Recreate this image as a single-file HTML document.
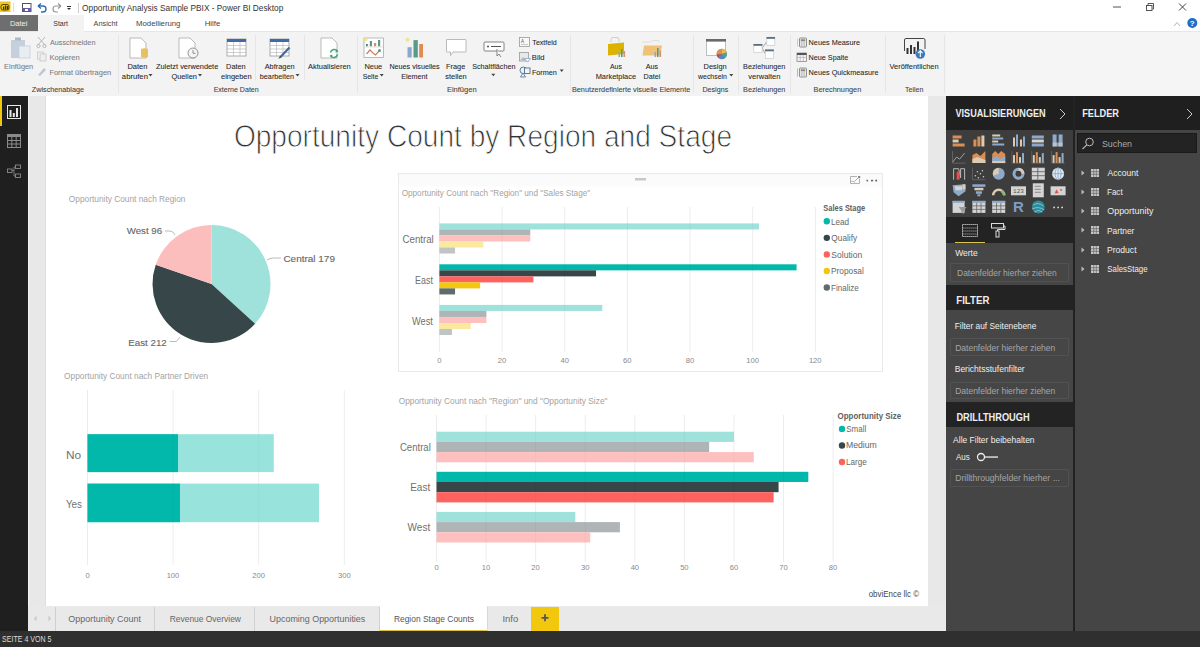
<!DOCTYPE html>
<html><head><meta charset="utf-8">
<style>
*{margin:0;padding:0;box-sizing:border-box}
html,body{width:1200px;height:647px;overflow:hidden;background:#fff;font-family:"Liberation Sans",sans-serif}
.a{position:absolute}
.t{position:absolute;white-space:nowrap;line-height:1;transform:translateY(-50%)}
.c{text-align:center;transform:translate(-50%,-50%)}
.r{text-align:right;transform:translate(-100%,-50%)}
</style></head><body>

<!-- title bar -->
<div class="a" style="left:0;top:0;width:1200px;height:15px;background:#fff"></div>
<!-- tabs row -->
<div class="a" style="left:0;top:15px;width:1200px;height:16px;background:#fff"></div>
<div class="a" style="left:0;top:15px;width:38px;height:16px;background:#6e6e6e"></div>
<!-- ribbon -->
<div class="a" style="left:0;top:31px;width:946px;height:65px;background:#f3f3f3;border-top:1px solid #e6e6e6"></div>
<div class="a" style="left:946px;top:31px;width:254px;height:65px;background:#f5f5f5;border-top:1px solid #e6e6e6"></div>

<div class="a" style="left:38px;top:15px;width:46px;height:17px;background:#f3f3f3"></div>
<!-- left nav -->
<div class="a" style="left:0;top:96px;width:28px;height:535px;background:#1f1f1f"></div>
<div class="a" style="left:0;top:96px;width:1.5px;height:30px;background:#f2c80f"></div>

<!-- canvas bg -->
<div class="a" style="left:28px;top:96px;width:918px;height:510px;background:#e8e8e8"></div>
<div class="a" style="left:46px;top:96px;width:882px;height:510px;background:#fff"></div>
<div class="a" style="left:28px;top:96px;width:1px;height:535px;background:#f4f4f4"></div>
<div class="a" style="left:45px;top:96px;width:1px;height:510px;background:#dedede"></div>

<!-- tab bar -->
<div class="a" style="left:28px;top:606px;width:918px;height:25px;background:#e9e9e9"></div>

<!-- status bar -->
<div class="a" style="left:0;top:631px;width:1200px;height:16px;background:#2f2f2f"></div>

<!-- right panes -->
<div class="a" style="left:946px;top:96px;width:254px;height:535px;background:#454545"></div>
<div class="a" style="left:946px;top:96px;width:128px;height:34px;background:#1f1f1f"></div>
<div class="a" style="left:1074px;top:96px;width:126px;height:34px;background:#1f1f1f"></div>

<!-- ===== TITLE BAR ===== -->
<svg class="a" style="left:0;top:0" width="80" height="15" viewBox="0 0 80 15">
 <rect x="0" y="1.5" width="10.5" height="10.5" fill="#f0c81c"/>
 <rect x="1" y="4.5" width="8" height="5.5" rx="2" fill="none" stroke="#5a4a10" stroke-width="1"/>
 <rect x="3" y="6.5" width="1.3" height="3" fill="#3a2a00"/><rect x="5" y="5.5" width="1.3" height="4" fill="#3a2a00"/><rect x="7" y="6" width="1.3" height="3.5" fill="#3a2a00"/>
 <rect x="13" y="3" width="1" height="9" fill="#ddd"/>
 <rect x="22.5" y="3.5" width="8.5" height="8" fill="#fff" stroke="#555" stroke-width="1"/>
 <rect x="22.5" y="8" width="8.5" height="3.5" fill="#6b58a6"/>
 <rect x="25" y="9" width="3" height="2" fill="#fff"/>
 <path d="M38 6 L41 3.5 M38 6 L41 8.5 M38 6 H43 A3 3 0 0 1 43 12 H41" stroke="#2f6db5" stroke-width="1.4" fill="none"/>
 <path d="M61 6 L58 3.5 M61 6 L58 8.5 M61 6 H56 A3 3 0 0 0 56 12 H58" stroke="#999" stroke-width="1.2" fill="none"/>
 <rect x="67" y="6" width="4" height="1" fill="#333"/>
 <path d="M67 8 H71 L69 10 Z" fill="#333"/>
 <rect x="78" y="3" width="1" height="10" fill="#ccc"/>
</svg>
<svg class="a" style="left:1100px;top:0" width="100" height="31" viewBox="0 0 100 31">
 <rect x="13" y="6.5" width="8" height="1" fill="#555"/>
 <rect x="46.5" y="5.5" width="5.5" height="5" fill="none" stroke="#444" stroke-width="0.9"/>
 <path d="M48 5 V3.5 H53.5 V9 H52.5" fill="none" stroke="#444" stroke-width="0.9"/>
 <path d="M79 3.5 L86 10.5 M86 3.5 L79 10.5" stroke="#444" stroke-width="1"/>
 <path d="M74 26 L77 22.5 L80 26" stroke="#aaa" stroke-width="0.9" fill="none"/>
 <circle cx="92.3" cy="23" r="5" fill="#1f6fc5"/>
 <text x="92.3" y="26" font-size="8" font-weight="bold" fill="#fff" text-anchor="middle" font-family="Liberation Sans">?</text>
</svg>

<!-- tabs -->

<!-- ===== RIBBON CONTENT ===== -->

 <!-- separators -->
 <div class="a" style="left:118px;top:35px;width:1px;height:58px;background:#e6e6e6"></div>
 <div class="a" style="left:255px;top:35px;width:1px;height:45px;background:#e6e6e6"></div>
 <div class="a" style="left:304px;top:35px;width:1px;height:45px;background:#e6e6e6"></div>
 <div class="a" style="left:357px;top:35px;width:1px;height:58px;background:#e6e6e6"></div>
 <div class="a" style="left:570px;top:35px;width:1px;height:58px;background:#e6e6e6"></div>
 <div class="a" style="left:693px;top:35px;width:1px;height:58px;background:#e6e6e6"></div>
 <div class="a" style="left:738px;top:35px;width:1px;height:58px;background:#e6e6e6"></div>
 <div class="a" style="left:790px;top:35px;width:1px;height:58px;background:#e6e6e6"></div>
 <div class="a" style="left:885px;top:35px;width:1px;height:58px;background:#e6e6e6"></div>
 <div class="a" style="left:944px;top:35px;width:1px;height:58px;background:#e6e6e6"></div>

        
    
         
           
            
<!-- ribbon icons -->
<svg class="a" style="left:0;top:31px" width="946" height="65" viewBox="0 31 946 65">
 <!-- Einfuegen clipboard -->
 <rect x="11" y="40" width="14" height="18" fill="#c6d0dc"/>
 <rect x="15" y="37.5" width="6" height="3" fill="#b0bac6"/>
 <rect x="19" y="46" width="11" height="12" fill="#e8edf2" stroke="#c6d0dc" stroke-width="0.8"/>
 <!-- scissors -->
 <path d="M38 37 L45 45 M45 37 L38 45" stroke="#b8b8b8" stroke-width="1"/>
 <circle cx="38.5" cy="46" r="1.6" fill="none" stroke="#b8b8b8"/><circle cx="44.5" cy="46" r="1.6" fill="none" stroke="#b8b8b8"/>
 <rect x="37.5" y="52" width="6" height="7" fill="none" stroke="#c6c6c6" stroke-width="0.8"/>
 <rect x="40" y="54" width="6" height="7" fill="#eee" stroke="#c6c6c6" stroke-width="0.8"/>
 <path d="M38 75 L44 68 L46 70 L40 76 Z" fill="#bfc6d2"/>
 <!-- Daten abrufen -->
 <path d="M130 38 H141 L146 43 V58 H130 Z" fill="#fff" stroke="#aaa" stroke-width="0.8"/>
 <path d="M141 49 Q144.5 47.5 148 49 V57 Q144.5 58.5 141 57 Z" fill="#e8c060"/>
 <!-- zuletzt -->
 <path d="M179 38 H190 L195 43 V58 H179 Z" fill="#fff" stroke="#aaa" stroke-width="0.8"/>
 <circle cx="193" cy="53" r="5" fill="#f5f5f5" stroke="#888" stroke-width="0.9"/>
 <path d="M193 50 V53.3 H195.5" stroke="#777" stroke-width="0.8" fill="none"/>
 <!-- Daten eingeben table -->
 <rect x="227" y="39" width="19" height="17" fill="#fff" stroke="#999" stroke-width="0.8"/>
 <rect x="227" y="39" width="19" height="3" fill="#3e6aa8"/>
 <path d="M227 45.5 H246 M227 49 H246 M227 52.5 H246 M233.5 42 V56 M240 42 V56" stroke="#b0b0b0" stroke-width="0.6"/>
 <!-- Abfragen bearbeiten -->
 <rect x="270" y="39" width="19" height="17" fill="#fff" stroke="#999" stroke-width="0.8"/>
 <rect x="270" y="39" width="19" height="3" fill="#3e6aa8"/>
 <path d="M270 45.5 H289 M270 49 H289 M270 52.5 H289 M276.5 42 V56 M283 42 V56" stroke="#b0b0b0" stroke-width="0.6"/>
 <path d="M280 57.5 L289.5 47.5" stroke="#3e6aa8" stroke-width="2.2"/><path d="M279 58.5 L280.5 56.5" stroke="#333" stroke-width="1"/>
 <!-- Aktualisieren -->
 <path d="M321 38 H332 L337 43 V58 H321 Z" fill="#fff" stroke="#aaa" stroke-width="0.8"/>
 <path d="M330.5 52.5 A4 4 0 0 1 337.5 51 M337.5 54.5 A4 4 0 0 1 330.5 56" stroke="#3aa776" stroke-width="1.5" fill="none"/><path d="M336 49.5 L338.5 51.5 L335.5 52.5 Z M332 57.5 L329.5 55.5 L332.5 54.5 Z" fill="#3aa776"/>
 <!-- Neue Seite -->
 <rect x="364" y="38" width="19.5" height="19.5" fill="#fff" stroke="#aaa" stroke-width="0.8"/>
 <rect x="366" y="44" width="1.8" height="2.3" fill="#4a8070"/><rect x="369.8" y="41" width="2.2" height="5.3" fill="#5a9a88"/><rect x="374" y="43" width="2.2" height="3.3" fill="#e08b4f"/><rect x="378" y="40" width="2.2" height="6.3" fill="#5a9a88"/>
 <path d="M364.5 47 H383" stroke="#ccc" stroke-width="0.6"/>
 <path d="M366.5 54 L370 50 L373.5 53.5 L375.5 55 L379.5 50.5" stroke="#c88060" stroke-width="1.2" fill="none"/>
 <circle cx="379.5" cy="50.5" r="1.5" fill="#5a9a88"/>
 <circle cx="365.5" cy="39.5" r="2" fill="#f0e090" opacity="0.9"/>
 <!-- Neues visuelles Element -->
 <rect x="407.5" y="47.2" width="4.2" height="10.3" fill="#8aa8cc"/><rect x="413.5" y="40.1" width="4.3" height="17.4" fill="#5a9a88"/><rect x="419.2" y="44" width="3.8" height="13.5" fill="#e08b4f"/>
 <circle cx="407.5" cy="39.7" r="2" fill="#f0e090" opacity="0.9"/>
 <!-- Frage stellen -->
 <path d="M447 39.5 H465.5 Q466 39.5 466 40 V51.5 Q466 52 465.5 52 H453 L450.5 55.5 V52 H447 Q446.5 52 446.5 51.5 V40 Q446.5 39.5 447 39.5 Z" fill="#fff" stroke="#aaa" stroke-width="0.8"/>
 <!-- Schaltflaechen -->
 <rect x="484" y="42" width="20" height="9" rx="1" fill="#fff" stroke="#777" stroke-width="0.9"/>
 <circle cx="488" cy="46.5" r="1" fill="#555"/><rect x="491" y="46" width="10" height="1" fill="#555"/>
 <path d="M497 49 L497 56 L499 54 L501 57" stroke="#666" stroke-width="0.8" fill="#fff"/>
 <!-- Textfeld/Bild/Formen small -->
 <rect x="519.5" y="37.5" width="10" height="9" fill="#f8f8f8" stroke="#999" stroke-width="0.8"/>
 <text x="521" y="42.5" font-size="4.5" fill="#555" font-family="Liberation Sans">A</text>
 <path d="M521 44.5 H528" stroke="#aaa" stroke-width="0.6"/>
 <rect x="519.5" y="52.5" width="9" height="8.5" fill="#e8e8e8" stroke="#999" stroke-width="0.8"/>
 <path d="M520 60.5 L523 57 L526 60.5 Z" fill="#b8b8b8"/>
 <path d="M524.5 58.5 H530.5 L527.5 62 Z" fill="#fff" stroke="#6a8ab0" stroke-width="0.6"/>
 <circle cx="523.3" cy="70.3" r="3.3" fill="#e8f0f8" stroke="#4a6e94" stroke-width="0.9"/>
 <rect x="524.5" y="68" width="5.5" height="5.5" fill="#f0f6fc" stroke="#4a6e94" stroke-width="0.9"/>
 <path d="M520.5 77 L523 73 L525.5 77 Z" fill="#f0f6fc" stroke="#4a6e94" stroke-width="0.8"/>
 <!-- Aus Marketplace -->
 <path d="M611 42 V39.5 Q611 37.5 613 37.5 H617 Q619 37.5 619 39.5 V42" fill="none" stroke="#d8d0a8" stroke-width="1"/>
 <path d="M608 44 L624 42.5 V54 L608 55.5 Z" fill="#dcb400"/>
 <rect x="618.5" y="52" width="1.6" height="5" fill="#8aa8cc"/><rect x="621" y="49" width="1.6" height="8" fill="#5a9a88"/><rect x="623.5" y="51" width="1.6" height="6" fill="#d89070"/>
 <!-- Aus Datei -->
 <path d="M642.5 42 H651 L653 40.5 H658 L660 42" fill="none" stroke="#d8d8d8" stroke-width="0.8"/>
 <path d="M644 45.5 H662 L660 55.5 H642.5 Z" fill="#efc27a"/>
 <rect x="654.5" y="52" width="1.6" height="5" fill="#8aa8cc"/><rect x="657" y="48" width="1.6" height="9" fill="#5a9a88"/><rect x="659.5" y="50.5" width="1.6" height="6.5" fill="#d89070"/>
 <!-- Design wechseln -->
 <rect x="706.5" y="39.5" width="19" height="16" fill="#fff" stroke="#b8b8b8" stroke-width="0.9"/>
 <rect x="706" y="39" width="20" height="2.6" fill="#6a6a6a"/>
 <circle cx="721.8" cy="54" r="5.2" fill="#5a86c0"/>
 <path d="M721.8 54 L721.8 48.8 A5.2 5.2 0 0 1 726.8 52.5 Z" fill="#e8b84a"/>
 <path d="M721.8 54 L726.8 52.5 A5.2 5.2 0 0 1 725.5 57.7 Z" fill="#4aa88a"/>
 <path d="M721.8 54 L716.6 54.5 A5.2 5.2 0 0 1 721.8 48.8 Z" fill="#e09050"/>
 <path d="M721.8 54 L718.2 57.8 A5.2 5.2 0 0 1 716.6 54.5 Z" fill="#c0504d"/>
 <!-- Beziehungen verwalten -->
 <path d="M762.2 48 L766.5 42 M762.2 48 L765 53.5" stroke="#888" stroke-width="0.7" fill="none"/>
 <rect x="753.8" y="44.3" width="8.3" height="8" fill="#fff" stroke="#c8c8c8" stroke-width="0.7"/>
 <rect x="753.5" y="44" width="8.8" height="1.8" fill="#5a6e82"/>
 <rect x="766.8" y="37.3" width="8" height="8" fill="#fff" stroke="#c8c8c8" stroke-width="0.7"/>
 <rect x="766.5" y="37" width="8.5" height="1.8" fill="#5a6e82"/>
 <rect x="765.3" y="49.8" width="8.3" height="8.5" fill="#fff" stroke="#c8c8c8" stroke-width="0.7"/>
 <rect x="765" y="49.5" width="8.8" height="1.8" fill="#5a6e82"/>
 <!-- Berechnungen small -->
 <rect x="799.5" y="38" width="7" height="9" rx="0.8" fill="#e8e8e8" stroke="#777" stroke-width="0.8"/>
 <rect x="800.8" y="39.3" width="4.4" height="2" fill="#888"/>
 <path d="M801 43 H805 M801 45 H805" stroke="#888" stroke-width="0.7" stroke-dasharray="1 0.6"/>
 <path d="M797.5 38.5 V46.5" stroke="#bbb" stroke-width="0.7"/>
 <rect x="797" y="53" width="9.5" height="8.5" fill="#f4f4f4" stroke="#888" stroke-width="0.8"/>
 <rect x="797" y="53" width="9.5" height="2" fill="#555"/>
 <path d="M797 57.5 H806.5 M800.2 55 V61.5 M803.3 55 V61.5" stroke="#aaa" stroke-width="0.6"/>
 <rect x="799.5" y="68" width="7" height="9" rx="0.8" fill="#e8e8e8" stroke="#777" stroke-width="0.8"/>
 <rect x="800.8" y="69.3" width="4.4" height="2" fill="#888"/>
 <path d="M801 73 H805 M801 75 H805" stroke="#888" stroke-width="0.7" stroke-dasharray="1 0.6"/>
 <path d="M797.5 68.5 V76.5" stroke="#d8b040" stroke-width="0.9"/>
 <!-- Veroeffentlichen -->
 <path d="M904.5 51 V40 Q904.5 38.5 906 38.5 H923.5 Q925 38.5 925 40 V49" fill="none" stroke="#444" stroke-width="1"/>
 <rect x="906.5" y="48" width="2" height="6" fill="#333"/><rect x="910" y="45" width="2" height="9" fill="#333"/><rect x="913.5" y="47" width="2" height="7" fill="#333"/><rect x="917" y="41.5" width="2" height="10" fill="#333"/>
 <circle cx="920.3" cy="54" r="4.8" fill="#3a7bbf"/>
 <path d="M920.3 57 V51 M918 53.2 L920.3 50.9 L922.6 53.2" stroke="#fff" stroke-width="1.1" fill="none"/>
</svg>
<svg class="a" style="left:0;top:0" width="1200" height="647" viewBox="0 0 1200 647" font-family="Liberation Sans">
<path d="M211.5 284 L211.50 225.00 A59 59 0 0 1 255.12 323.72 Z" fill="#9fe1db"/>
<path d="M211.5 284 L255.12 323.72 A59 59 0 0 1 155.73 264.76 Z" fill="#374649"/>
<path d="M211.5 284 L155.73 264.76 A59 59 0 0 1 211.50 225.00 Z" fill="#fcbdbd"/>
<path d="M165 231 H170 Q173 231 175 235" stroke="#aaa" stroke-width="0.8" fill="none"/>
<path d="M267 260 Q270 258 273 258 H281" stroke="#aaa" stroke-width="0.8" fill="none"/>
<path d="M169.5 341.5 H176.5 L180 337" stroke="#aaa" stroke-width="0.8" fill="none"/>
<rect x="398.5" y="173.5" width="484" height="198" fill="#fff" stroke="#e9e9e9" stroke-width="1"/>
<rect x="399" y="174" width="483" height="12.5" fill="#fbfbfb"/>
<rect x="635" y="178" width="11" height="2.5" fill="#c8c8c8"/>
<path d="M857 176.5 H850.5 V183.5 H859.5 V179" fill="none" stroke="#aaa" stroke-width="0.9"/>
<path d="M854.5 181.5 L859 177" stroke="#999" stroke-width="0.8" fill="none"/><rect x="858" y="176" width="2.2" height="2.2" fill="#888"/><path d="M851 181.5 Q853 180.5 855 182.5" stroke="#aaa" stroke-width="0.8" fill="none"/>
<circle cx="872.5" cy="180.5" r="0.8" fill="#777"/>
<circle cx="876.0" cy="180.5" r="0.8" fill="#777"/>
<rect x="438.90" y="207" width="1" height="145" fill="#f4f4f4"/>
<rect x="501.56" y="207" width="1" height="145" fill="#f4f4f4"/>
<rect x="564.22" y="207" width="1" height="145" fill="#f4f4f4"/>
<rect x="626.88" y="207" width="1" height="145" fill="#f4f4f4"/>
<rect x="689.54" y="207" width="1" height="145" fill="#f4f4f4"/>
<rect x="752.20" y="207" width="1" height="145" fill="#f4f4f4"/>
<rect x="814.86" y="207" width="1" height="145" fill="#f4f4f4"/>
<rect x="439.4" y="223.40" width="319.57" height="6.05" fill="#9fe1db"/>
<rect x="439.4" y="229.42" width="90.86" height="6.05" fill="#afb5b6"/>
<rect x="439.4" y="235.44" width="90.86" height="6.05" fill="#fdc0bf"/>
<rect x="439.4" y="241.46" width="43.86" height="6.05" fill="#fae99f"/>
<rect x="439.4" y="247.48" width="15.66" height="6.05" fill="#bfc4c5"/>
<rect x="439.4" y="264.30" width="357.16" height="6.05" fill="#01b8aa"/>
<rect x="439.4" y="270.32" width="156.65" height="6.05" fill="#374649"/>
<rect x="439.4" y="276.34" width="93.99" height="6.05" fill="#fd625e"/>
<rect x="439.4" y="282.36" width="40.73" height="6.05" fill="#f2c80f"/>
<rect x="439.4" y="288.38" width="15.66" height="6.05" fill="#5f6b6d"/>
<rect x="439.4" y="304.90" width="162.92" height="6.05" fill="#9fe1db"/>
<rect x="439.4" y="310.92" width="46.99" height="6.05" fill="#afb5b6"/>
<rect x="439.4" y="316.94" width="46.99" height="6.05" fill="#fdc0bf"/>
<rect x="439.4" y="322.96" width="31.33" height="6.05" fill="#fae99f"/>
<rect x="439.4" y="328.98" width="12.53" height="6.05" fill="#bfc4c5"/>
<circle cx="826.8" cy="221.30" r="3.2" fill="#01b8aa"/>
<circle cx="826.8" cy="237.85" r="3.2" fill="#374649"/>
<circle cx="826.8" cy="254.40" r="3.2" fill="#fd625e"/>
<circle cx="826.8" cy="270.95" r="3.2" fill="#f2c80f"/>
<circle cx="826.8" cy="287.50" r="3.2" fill="#5f6b6d"/>
<rect x="87.00" y="390" width="1" height="175" fill="#f4f4f4"/>
<rect x="172.60" y="390" width="1" height="175" fill="#f4f4f4"/>
<rect x="258.20" y="390" width="1" height="175" fill="#f4f4f4"/>
<rect x="343.80" y="390" width="1" height="175" fill="#f4f4f4"/>
<rect x="87.5" y="434.2" width="186.3" height="37.9" fill="#99e3dd"/>
<rect x="87.5" y="434.2" width="90.5" height="37.9" fill="#01b8aa"/>
<rect x="87.5" y="483.6" width="231.5" height="38.6" fill="#99e3dd"/>
<rect x="87.5" y="483.6" width="92.5" height="38.6" fill="#01b8aa"/>
<rect x="436.00" y="415" width="1" height="147" fill="#f4f4f4"/>
<rect x="485.57" y="415" width="1" height="147" fill="#f4f4f4"/>
<rect x="535.15" y="415" width="1" height="147" fill="#f4f4f4"/>
<rect x="584.73" y="415" width="1" height="147" fill="#f4f4f4"/>
<rect x="634.30" y="415" width="1" height="147" fill="#f4f4f4"/>
<rect x="683.88" y="415" width="1" height="147" fill="#f4f4f4"/>
<rect x="733.45" y="415" width="1" height="147" fill="#f4f4f4"/>
<rect x="783.02" y="415" width="1" height="147" fill="#f4f4f4"/>
<rect x="832.60" y="415" width="1" height="147" fill="#f4f4f4"/>
<rect x="436.5" y="431.70" width="297.45" height="10.2" fill="#9fe1db"/>
<rect x="436.5" y="441.90" width="272.66" height="10.2" fill="#afb5b6"/>
<rect x="436.5" y="452.10" width="317.28" height="10.2" fill="#fdc0bf"/>
<rect x="436.5" y="471.80" width="371.81" height="10.2" fill="#01b8aa"/>
<rect x="436.5" y="482.00" width="342.07" height="10.2" fill="#374649"/>
<rect x="436.5" y="492.20" width="337.11" height="10.2" fill="#fd625e"/>
<rect x="436.5" y="511.90" width="138.81" height="10.2" fill="#9fe1db"/>
<rect x="436.5" y="522.10" width="183.43" height="10.2" fill="#afb5b6"/>
<rect x="436.5" y="532.30" width="153.68" height="10.2" fill="#fdc0bf"/>
<circle cx="842" cy="428.90" r="3.2" fill="#01b8aa"/>
<circle cx="842" cy="445.45" r="3.2" fill="#374649"/>
<circle cx="842" cy="462.00" r="3.2" fill="#fd625e"/>
<rect x="866.5" y="179.8" width="1.6" height="1.6" fill="#666"/><rect x="871" y="179.8" width="1.6" height="1.6" fill="#666"/><rect x="875.5" y="179.8" width="1.6" height="1.6" fill="#666"/>
<rect x="438.90" y="207" width="1" height="145" fill="#000" opacity="0.03"/>
<rect x="501.56" y="207" width="1" height="145" fill="#000" opacity="0.03"/>
<rect x="564.22" y="207" width="1" height="145" fill="#000" opacity="0.03"/>
<rect x="626.88" y="207" width="1" height="145" fill="#000" opacity="0.03"/>
<rect x="689.54" y="207" width="1" height="145" fill="#000" opacity="0.03"/>
<rect x="752.20" y="207" width="1" height="145" fill="#000" opacity="0.03"/>
<rect x="814.86" y="207" width="1" height="145" fill="#000" opacity="0.03"/>
<rect x="87.00" y="390" width="1" height="175" fill="#000" opacity="0.03"/>
<rect x="172.60" y="390" width="1" height="175" fill="#000" opacity="0.03"/>
<rect x="258.20" y="390" width="1" height="175" fill="#000" opacity="0.03"/>
<rect x="343.80" y="390" width="1" height="175" fill="#000" opacity="0.03"/>
<rect x="436.00" y="415" width="1" height="147" fill="#000" opacity="0.03"/>
<rect x="485.57" y="415" width="1" height="147" fill="#000" opacity="0.03"/>
<rect x="535.15" y="415" width="1" height="147" fill="#000" opacity="0.03"/>
<rect x="584.73" y="415" width="1" height="147" fill="#000" opacity="0.03"/>
<rect x="634.30" y="415" width="1" height="147" fill="#000" opacity="0.03"/>
<rect x="683.88" y="415" width="1" height="147" fill="#000" opacity="0.03"/>
<rect x="733.45" y="415" width="1" height="147" fill="#000" opacity="0.03"/>
<rect x="783.02" y="415" width="1" height="147" fill="#000" opacity="0.03"/>
<rect x="832.60" y="415" width="1" height="147" fill="#000" opacity="0.03"/>
</svg><!-- left nav icons -->
<svg class="a" style="left:0;top:96px" width="28" height="100" viewBox="0 96 28 100">
 <rect x="7.5" y="105.5" width="13" height="13" fill="none" stroke="#e8e8e8" stroke-width="1"/>
 <rect x="9.5" y="110" width="2" height="7" fill="#e8e8e8"/><rect x="12.8" y="113" width="2" height="4" fill="#e8e8e8"/><rect x="16" y="108" width="2" height="9" fill="#e8e8e8"/>
 <rect x="7.5" y="134.5" width="13" height="13" fill="none" stroke="#8a8a8a" stroke-width="1"/>
 <rect x="7.5" y="134.5" width="13" height="2.5" fill="#8a8a8a"/>
 <path d="M7.5 140.5 H20.5 M7.5 144 H20.5 M11.8 137 V147.5 M16.2 137 V147.5" stroke="#8a8a8a" stroke-width="1"/>
 <rect x="7.5" y="169" width="4.5" height="3.5" fill="none" stroke="#8a8a8a" stroke-width="0.9"/>
 <rect x="15.5" y="165" width="5" height="3.5" fill="none" stroke="#8a8a8a" stroke-width="0.9"/>
 <rect x="15.5" y="174" width="5" height="3.5" fill="none" stroke="#8a8a8a" stroke-width="0.9"/>
 <path d="M12 170.5 H14 V167 H15.5 M14 170.5 V176 H15.5" stroke="#8a8a8a" stroke-width="0.8" fill="none"/>
</svg>

<!-- page tabs -->
<div class="a" style="left:28px;top:606px;width:27px;height:25px;background:#e9e9e9"></div>
<svg class="a" style="left:28px;top:606px" width="30" height="25" viewBox="0 0 30 25">
 <path d="M8.5 9.5 L6 12.5 L8.5 15.5" fill="#c8c8c8"/>
 <path d="M20.5 9.5 L23 12.5 L20.5 15.5" fill="#c8c8c8"/>
 <rect x="27" y="1" width="1" height="24" fill="#cfcfcf"/>
</svg>
<div class="a" style="left:154px;top:607px;width:1px;height:24px;background:#d0d0d0"></div>
<div class="a" style="left:254px;top:607px;width:1px;height:24px;background:#d0d0d0"></div>
<div class="a" style="left:379px;top:607px;width:1px;height:24px;background:#d0d0d0"></div>
<div class="a" style="left:380px;top:606px;width:107px;height:25px;background:#fff;border-bottom:1px solid #e0c040"></div>
<div class="a" style="left:487px;top:607px;width:1px;height:24px;background:#d8d8d8"></div>
<div class="a" style="left:531px;top:607px;width:28px;height:24px;background:#f2c80f"></div>

<!-- status -->

<!-- ===== VIZ PANE ===== -->
<div class="a" style="left:946px;top:130px;width:127px;height:87px;background:#3d3d3d"></div>
<div class="a" style="left:946px;top:217px;width:127px;height:26px;background:#232323"></div>
<div class="a" style="left:955px;top:241.5px;width:29.5px;height:1.5px;background:#d6c352"></div>
<div class="a" style="left:946px;top:243px;width:127px;height:42px;background:#464646"></div>
<div class="a" style="left:946px;top:285px;width:127px;height:25px;background:#232323"></div>
<div class="a" style="left:946px;top:310px;width:127px;height:92px;background:#464646"></div>
<div class="a" style="left:946px;top:402px;width:127px;height:25px;background:#232323"></div>
<div class="a" style="left:946px;top:427px;width:127px;height:204px;background:#454545"></div>
<div class="a" style="left:1073px;top:96px;width:2px;height:535px;background:#222"></div>


<svg class="a" style="left:1058px;top:108px" width="10" height="12"><path d="M2 1 L7 6 L2 11" stroke="#ccc" stroke-width="1" fill="none"/></svg>
<svg class="a" style="left:1185px;top:108px" width="10" height="12"><path d="M2 1 L7 6 L2 11" stroke="#ccc" stroke-width="1" fill="none"/></svg>

<div class="a" style="left:950px;top:263px;width:119px;height:19px;border:1px solid #525252;border-radius:1px"></div>
<div class="a" style="left:950px;top:338px;width:119px;height:18px;border:1px solid #525252;border-radius:1px"></div>
<div class="a" style="left:950px;top:382px;width:119px;height:17px;border:1px solid #525252;border-radius:1px"></div>
<svg class="a" style="left:975px;top:450px" width="26" height="14"><circle cx="6" cy="7" r="3.5" fill="none" stroke="#eee" stroke-width="1.3"/><rect x="9.5" y="6.4" width="13.5" height="1.3" fill="#eee"/></svg>
<div class="a" style="left:950px;top:469px;width:119px;height:18px;border:1px solid #525252;border-radius:1px"></div>

<!-- format tab icons -->
<svg class="a" style="left:946px;top:217px" width="127" height="26" viewBox="946 217 127 26">
 <rect x="962.5" y="224.5" width="15" height="12" fill="none" stroke="#ddd" stroke-width="1" stroke-dasharray="1.2 0.8"/>
 <path d="M962.5 228 H977.5 M962.5 231 H977.5 M962.5 234 H977.5" stroke="#ccc" stroke-width="0.8" stroke-dasharray="1.2 0.8"/>
 <rect x="991.5" y="223.5" width="12" height="4.5" fill="none" stroke="#ddd" stroke-width="1"/>
 <path d="M1003.5 226 H1005 V229.5 H997.5 V231" stroke="#ddd" stroke-width="1" fill="none"/>
 <rect x="996" y="231" width="3" height="6" fill="none" stroke="#ddd" stroke-width="1"/>
</svg>

<!-- FELDER pane -->
<div class="a" style="left:1077px;top:133px;width:120px;height:20px;background:#232323;border:1px solid #1a1a1a"></div>
<svg class="a" style="left:1080px;top:136px" width="16" height="15"><circle cx="9.5" cy="6" r="3.8" fill="none" stroke="#bbb" stroke-width="1"/><path d="M6.8 8.8 L2.5 13" stroke="#bbb" stroke-width="1.1"/></svg>
<svg class="a" style="left:946px;top:130px" width="127" height="87" viewBox="946 130 127 87">
<rect x="952.6" y="135.5" width="9" height="3" fill="#d98e55"/><rect x="952.6" y="139.5" width="6" height="3" fill="#dccbb2"/><rect x="952.6" y="143.5" width="12" height="3" fill="#d98e55"/>
<rect x="973.4" y="139.5" width="3" height="7" fill="#d98e55"/><rect x="977.4" y="136.5" width="3" height="10" fill="#d98e55"/><rect x="981.4" y="135.5" width="3" height="11" fill="#dccbb2"/>
<rect x="992.2" y="134.5" width="8" height="2" fill="#dccbb2"/><rect x="992.2" y="137.5" width="11" height="2" fill="#8eaacb"/><rect x="992.2" y="140.5" width="6" height="2" fill="#dccbb2"/><rect x="992.2" y="143.5" width="12" height="2" fill="#8eaacb"/>
<rect x="1013.0" y="137.5" width="2" height="9" fill="#dccbb2"/><rect x="1016.0" y="134.5" width="2" height="12" fill="#8eaacb"/><rect x="1020.0" y="139.5" width="2" height="7" fill="#dccbb2"/><rect x="1023.0" y="136.5" width="2" height="10" fill="#8eaacb"/>
<rect x="1031.8" y="135.5" width="12" height="3" fill="#8eaacb"/><rect x="1031.8" y="139.5" width="12" height="3" fill="#d4d4d4"/><rect x="1031.8" y="143.5" width="12" height="3" fill="#8eaacb"/>
<rect x="1052.6" y="134.5" width="4" height="12" fill="#8eaacb"/><rect x="1058.6" y="134.5" width="4" height="12" fill="#8eaacb"/><rect x="1052.6" y="142.5" width="10" height="4" fill="#d4d4d4" opacity="0.6"/>
<path d="M952.6 162.1 L956.6 157.1 L959.6 159.1 L964.6 153.1" stroke="#aaa" stroke-width="0.9" fill="none"/><path d="M952.6 151.1 V163.1 H965.6" stroke="#777" stroke-width="0.7" fill="none"/>
<path d="M972.4 163.1 V155.1 L976.4 153.1 L980.4 156.1 L985.4 151.1 V163.1 Z" fill="#d98e55"/><path d="M972.4 163.1 V159.1 L977.4 157.1 L985.4 160.1 V163.1 Z" fill="#dccbb2"/>
<path d="M992.2 163.1 V154.1 L995.2 151.1 L998.2 154.1 L1001.2 151.1 L1005.2 154.1 V163.1 Z" fill="#d98e55"/><path d="M992.2 163.1 V158.1 L996.2 156.1 L1000.2 159.1 L1005.2 156.1 V163.1 Z" fill="#8eaacb"/><rect x="992.2" y="161.1" width="13" height="2" fill="#dccbb2"/>
<rect x="1013.0" y="155.1" width="2" height="8" fill="#dccbb2"/>
<rect x="1016.0" y="152.1" width="2" height="11" fill="#d98e55"/>
<rect x="1019.0" y="157.1" width="2" height="6" fill="#dccbb2"/>
<rect x="1022.0" y="153.1" width="2" height="10" fill="#8eaacb"/>
<path d="M1012.0 151.1 V163.1 H1025.0" stroke="#777" stroke-width="0.6" fill="none"/>
<rect x="1032.8" y="155.1" width="2" height="8" fill="#dccbb2"/>
<rect x="1035.8" y="152.1" width="2" height="11" fill="#d98e55"/>
<rect x="1038.8" y="157.1" width="2" height="6" fill="#dccbb2"/>
<rect x="1041.8" y="153.1" width="2" height="10" fill="#8eaacb"/>
<path d="M1031.8 151.1 V163.1 H1044.8" stroke="#777" stroke-width="0.6" fill="none"/>
<rect x="1052.6" y="155.1" width="2" height="8" fill="#dccbb2"/>
<rect x="1055.6" y="152.1" width="2" height="11" fill="#d98e55"/>
<rect x="1058.6" y="157.1" width="2" height="6" fill="#dccbb2"/>
<rect x="1061.6" y="153.1" width="2" height="10" fill="#8eaacb"/>
<path d="M1051.6 151.1 V163.1 H1064.6" stroke="#777" stroke-width="0.6" fill="none"/>
<path d="M953.6 179.7 V168.7 H958.6 L960.6 177.7 V168.7 H964.6 V179.7" stroke="#bbb" stroke-width="1" fill="none"/><rect x="956.6" y="171.7" width="3" height="8" fill="#e0504d"/>
<circle cx="975.4" cy="175.7" r="0.8" fill="#ccc"/>
<circle cx="977.4" cy="171.7" r="0.8" fill="#ccc"/>
<circle cx="980.4" cy="173.7" r="0.8" fill="#ccc"/>
<circle cx="982.4" cy="170.7" r="0.8" fill="#ccc"/>
<circle cx="978.4" cy="177.7" r="0.8" fill="#ccc"/>
<circle cx="983.4" cy="176.7" r="0.8" fill="#ccc"/>
<path d="M972.4 167.7 V179.7 H985.4" stroke="#777" stroke-width="0.6" fill="none"/>
<circle cx="998.7" cy="173.7" r="6" fill="#8eaacb"/><path d="M998.7 173.7 V167.7 A6 6 0 0 0 993.2 175.7 Z" fill="#dccbb2"/>
<circle cx="1018.5" cy="173.7" r="4.5" fill="none" stroke="#8eaacb" stroke-width="3"/><path d="M1018.5 169.2 A4.5 4.5 0 0 1 1023.0 173.7" stroke="#dccbb2" stroke-width="3" fill="none"/>
<rect x="1031.8" y="167.7" width="13" height="12" fill="#d4d4d4"/><path d="M1031.8 171.7 H1044.8 M1031.8 175.7 H1044.8 M1037.8 167.7 V179.7" stroke="#555" stroke-width="0.8"/>
<circle cx="1058.1" cy="173.7" r="6" fill="#dfe8f2"/><path d="M1052.1 173.7 H1064.1 M1058.1 167.7 V179.7" stroke="#7a9cc6" stroke-width="0.7"/><ellipse cx="1058.1" cy="173.7" rx="3" ry="6" fill="none" stroke="#7a9cc6" stroke-width="0.7"/>
<path d="M952.6 185.3 L964.6 184.3 L965.6 191.3 L958.6 196.3 L953.6 192.3 Z" fill="#8eaacb"/><path d="M954.6 186.3 L962.6 186.3 L961.6 190.3 L955.6 190.3 Z" fill="#d4d4d4"/><rect x="962.6" y="184.3" width="3" height="5" fill="#dccbb2"/>
<rect x="972.4" y="184.3" width="13" height="2.5" fill="#8eaacb"/><rect x="974.4" y="187.8" width="9" height="2.5" fill="#dccbb2"/><rect x="975.9" y="191.3" width="6" height="2.5" fill="#8eaacb"/><rect x="977.4" y="194.3" width="3" height="2" fill="#8eaacb"/>
<path d="M993.2 195.3 A5.5 5.5 0 0 1 1004.2 195.3" stroke="#dccbb2" stroke-width="2.5" fill="none"/><path d="M1001.2 190.8 A5.5 5.5 0 0 1 1004.2 195.3" stroke="#8cb870" stroke-width="2.5" fill="none"/>
<rect x="1011.0" y="186.3" width="15" height="9" fill="#d4d4d4"/><text x="1018.5" y="193.3" font-size="6" fill="#555" text-anchor="middle" font-family="Liberation Mono">123</text>
<rect x="1032.8" y="183.3" width="11" height="14" fill="#d4d4d4"/><path d="M1034.8 186.3 H1040.8 M1034.8 189.3 H1040.8 M1034.8 192.3 H1040.8" stroke="#777" stroke-width="0.8"/>
<rect x="1050.6" y="186.3" width="15" height="9" fill="#d4d4d4"/><path d="M1054.6 193.3 L1056.6 189.3 L1058.6 193.3 Z M1059.6 189.3 H1062.6 L1061.1 191.3 Z" fill="#e0504d"/>
<rect x="952.6" y="200.9" width="12" height="12" fill="#d4d4d4"/><rect x="952.6" y="200.9" width="12" height="2" fill="#8eaacb"/><path d="M958.6 206.9 H966.6 L963.6 210.9 V213.9 L961.6 212.9 V210.9 Z" fill="#999"/>
<rect x="972.4" y="200.9" width="13" height="12" fill="#d4d4d4"/><rect x="972.4" y="200.9" width="13" height="2" fill="#8eaacb"/><path d="M972.4 205.9 H985.4 M972.4 209.4 H985.4 M976.6999999999999 202.9 V212.9 M981.0 202.9 V212.9" stroke="#666" stroke-width="0.8"/>
<rect x="992.2" y="200.9" width="13" height="12" fill="#d4d4d4"/><rect x="992.2" y="200.9" width="13" height="2" fill="#8eaacb"/><path d="M992.2 205.9 H1005.2 M992.2 209.4 H1005.2 M996.5 202.9 V212.9 M1000.8000000000001 202.9 V212.9" stroke="#666" stroke-width="0.8"/>
<text x="1018.5" y="212.4" font-size="15" font-weight="bold" fill="#7e9cc4" text-anchor="middle" font-family="Liberation Sans">R</text>
<circle cx="1038.3" cy="206.9" r="6.5" fill="#2c8a9a"/><path d="M1033.3 204.9 Q1038.3 201.9 1043.3 205.9 M1032.3 208.9 Q1038.3 205.9 1044.3 209.9 M1034.3 211.9 Q1038.3 208.9 1042.3 211.9" stroke="#9ad0d8" stroke-width="0.8" fill="none"/>
<circle cx="1054.1" cy="207.4" r="0.9" fill="#ddd"/>
<circle cx="1058.1" cy="207.4" r="0.9" fill="#ddd"/>
<circle cx="1062.1" cy="207.4" r="0.9" fill="#ddd"/>
</svg><svg class="a" style="left:1080px;top:167.8px" width="22" height="10" viewBox="0 0 22 10"><path d="M1.5 2.5 L4.5 5 L1.5 7.5 Z" fill="#bbb"/><rect x="11" y="1" width="8" height="8" fill="#c8c8c8"/><path d="M11 3.7 H19 M11 6.3 H19 M13.7 1 V9 M16.3 1 V9" stroke="#555" stroke-width="0.6"/></svg>
<svg class="a" style="left:1080px;top:187.0px" width="22" height="10" viewBox="0 0 22 10"><path d="M1.5 2.5 L4.5 5 L1.5 7.5 Z" fill="#bbb"/><rect x="11" y="1" width="8" height="8" fill="#c8c8c8"/><path d="M11 3.7 H19 M11 6.3 H19 M13.7 1 V9 M16.3 1 V9" stroke="#555" stroke-width="0.6"/></svg>
<svg class="a" style="left:1080px;top:206.2px" width="22" height="10" viewBox="0 0 22 10"><path d="M1.5 2.5 L4.5 5 L1.5 7.5 Z" fill="#bbb"/><rect x="11" y="1" width="8" height="8" fill="#c8c8c8"/><path d="M11 3.7 H19 M11 6.3 H19 M13.7 1 V9 M16.3 1 V9" stroke="#555" stroke-width="0.6"/></svg>
<svg class="a" style="left:1080px;top:225.4px" width="22" height="10" viewBox="0 0 22 10"><path d="M1.5 2.5 L4.5 5 L1.5 7.5 Z" fill="#bbb"/><rect x="11" y="1" width="8" height="8" fill="#c8c8c8"/><path d="M11 3.7 H19 M11 6.3 H19 M13.7 1 V9 M16.3 1 V9" stroke="#555" stroke-width="0.6"/></svg>
<svg class="a" style="left:1080px;top:244.6px" width="22" height="10" viewBox="0 0 22 10"><path d="M1.5 2.5 L4.5 5 L1.5 7.5 Z" fill="#bbb"/><rect x="11" y="1" width="8" height="8" fill="#c8c8c8"/><path d="M11 3.7 H19 M11 6.3 H19 M13.7 1 V9 M16.3 1 V9" stroke="#555" stroke-width="0.6"/></svg>
<svg class="a" style="left:1080px;top:263.8px" width="22" height="10" viewBox="0 0 22 10"><path d="M1.5 2.5 L4.5 5 L1.5 7.5 Z" fill="#bbb"/><rect x="11" y="1" width="8" height="8" fill="#c8c8c8"/><path d="M11 3.7 H19 M11 6.3 H19 M13.7 1 V9 M16.3 1 V9" stroke="#555" stroke-width="0.6"/></svg>
<svg class="a" style="left:0;top:0" width="1200" height="647" viewBox="0 0 1200 647">
<path d="M148.5 74.1 H152.5 L150.5 76.6 Z" fill="#444"/>
<path d="M198.0 74.1 H202.0 L200.0 76.6 Z" fill="#444"/>
<path d="M295.5 74.1 H299.5 L297.5 76.6 Z" fill="#444"/>
<path d="M379.7 74.1 H383.7 L381.7 76.6 Z" fill="#444"/>
<path d="M491.3 73.8 H495.3 L493.3 76.3 Z" fill="#444"/>
<path d="M559.7 69.6 H563.7 L561.7 72.1 Z" fill="#444"/>
<path d="M729.3 74.1 H733.3 L731.3 76.6 Z" fill="#444"/>
<path d="M541.5 617.8 H548.5 M545 614.3 V621.3" stroke="#555" stroke-width="1.8"/>
</svg>
<svg class="a" style="left:0;top:0" width="1200" height="647" viewBox="0 0 1200 647" font-family="Liberation Sans">
<text x="82.07" y="10.8" font-size="9" fill="#333" textLength="201.23" lengthAdjust="spacingAndGlyphs">Opportunity Analysis Sample PBIX - Power BI Desktop</text>
<text x="9.90" y="26.3" font-size="7.8" fill="#eeeeee" textLength="17.57" lengthAdjust="spacingAndGlyphs">Datei</text>
<text x="53.22" y="26.3" font-size="7.8" fill="#333" textLength="14.76" lengthAdjust="spacingAndGlyphs">Start</text>
<text x="93.60" y="26.3" font-size="7.8" fill="#444" textLength="23.98" lengthAdjust="spacingAndGlyphs">Ansicht</text>
<text x="136.08" y="26.3" font-size="7.8" fill="#444" textLength="44.35" lengthAdjust="spacingAndGlyphs">Modellierung</text>
<text x="204.68" y="26.3" font-size="7.8" fill="#444" textLength="15.61" lengthAdjust="spacingAndGlyphs">Hilfe</text>
<text x="4.11" y="68.6" font-size="7.6" fill="#7c7c7c" textLength="29.10" lengthAdjust="spacingAndGlyphs" stroke="#7c7c7c" stroke-width="0.07">Einfügen</text>
<text x="50.00" y="44.7" font-size="7.6" fill="#7c7c7c" textLength="45.41" lengthAdjust="spacingAndGlyphs" stroke="#7c7c7c" stroke-width="0.07">Ausschneiden</text>
<text x="49.40" y="59.7" font-size="7.6" fill="#7c7c7c" textLength="30.23" lengthAdjust="spacingAndGlyphs" stroke="#7c7c7c" stroke-width="0.07">Kopieren</text>
<text x="49.40" y="74.7" font-size="7.6" fill="#7c7c7c" textLength="61.82" lengthAdjust="spacingAndGlyphs" stroke="#7c7c7c" stroke-width="0.07">Format übertragen</text>
<text x="127.40" y="68.6" font-size="7.6" fill="#262626" textLength="20.02" lengthAdjust="spacingAndGlyphs" stroke="#262626" stroke-width="0.07">Daten</text>
<text x="121.89" y="78.5" font-size="7.6" fill="#262626" textLength="26.04" lengthAdjust="spacingAndGlyphs" stroke="#262626" stroke-width="0.07">abrufen</text>
<text x="155.98" y="68.6" font-size="7.6" fill="#262626" textLength="62.29" lengthAdjust="spacingAndGlyphs" stroke="#262626" stroke-width="0.07">Zuletzt verwendete</text>
<text x="171.40" y="78.5" font-size="7.6" fill="#262626" textLength="25.51" lengthAdjust="spacingAndGlyphs" stroke="#262626" stroke-width="0.07">Quellen</text>
<text x="226.11" y="68.6" font-size="7.6" fill="#262626" textLength="19.60" lengthAdjust="spacingAndGlyphs" stroke="#262626" stroke-width="0.07">Daten</text>
<text x="221.00" y="78.5" font-size="7.6" fill="#262626" textLength="30.62" lengthAdjust="spacingAndGlyphs" stroke="#262626" stroke-width="0.07">eingeben</text>
<text x="264.70" y="68.6" font-size="7.6" fill="#262626" textLength="29.91" lengthAdjust="spacingAndGlyphs" stroke="#262626" stroke-width="0.07">Abfragen</text>
<text x="259.87" y="78.5" font-size="7.6" fill="#262626" textLength="34.04" lengthAdjust="spacingAndGlyphs" stroke="#262626" stroke-width="0.07">bearbeiten</text>
<text x="308.00" y="68.6" font-size="7.6" fill="#262626" textLength="42.72" lengthAdjust="spacingAndGlyphs" stroke="#262626" stroke-width="0.07">Aktualisieren</text>
<text x="364.40" y="68.6" font-size="7.6" fill="#262626" textLength="17.87" lengthAdjust="spacingAndGlyphs" stroke="#262626" stroke-width="0.07">Neue</text>
<text x="362.73" y="78.5" font-size="7.6" fill="#262626" textLength="15.52" lengthAdjust="spacingAndGlyphs" stroke="#262626" stroke-width="0.07">Seite</text>
<text x="389.43" y="68.6" font-size="7.6" fill="#262626" textLength="50.29" lengthAdjust="spacingAndGlyphs" stroke="#262626" stroke-width="0.07">Neues visuelles</text>
<text x="401.13" y="78.5" font-size="7.6" fill="#262626" textLength="26.36" lengthAdjust="spacingAndGlyphs" stroke="#262626" stroke-width="0.07">Element</text>
<text x="446.11" y="68.6" font-size="7.6" fill="#262626" textLength="19.15" lengthAdjust="spacingAndGlyphs" stroke="#262626" stroke-width="0.07">Frage</text>
<text x="445.35" y="78.5" font-size="7.6" fill="#262626" textLength="21.26" lengthAdjust="spacingAndGlyphs" stroke="#262626" stroke-width="0.07">stellen</text>
<text x="472.21" y="68.6" font-size="7.6" fill="#262626" textLength="43.19" lengthAdjust="spacingAndGlyphs" stroke="#262626" stroke-width="0.07">Schaltflächen</text>
<text x="532.36" y="44.7" font-size="7.6" fill="#262626" textLength="24.34" lengthAdjust="spacingAndGlyphs" stroke="#262626" stroke-width="0.07">Textfeld</text>
<text x="531.89" y="59.7" font-size="7.6" fill="#262626" textLength="12.74" lengthAdjust="spacingAndGlyphs" stroke="#262626" stroke-width="0.07">Bild</text>
<text x="531.92" y="74.7" font-size="7.6" fill="#262626" textLength="24.99" lengthAdjust="spacingAndGlyphs" stroke="#262626" stroke-width="0.07">Formen</text>
<text x="610.00" y="68.6" font-size="7.6" fill="#262626" textLength="11.91" lengthAdjust="spacingAndGlyphs" stroke="#262626" stroke-width="0.07">Aus</text>
<text x="595.71" y="78.5" font-size="7.6" fill="#262626" textLength="40.36" lengthAdjust="spacingAndGlyphs" stroke="#262626" stroke-width="0.07">Marketplace</text>
<text x="645.80" y="68.6" font-size="7.6" fill="#262626" textLength="12.42" lengthAdjust="spacingAndGlyphs" stroke="#262626" stroke-width="0.07">Aus</text>
<text x="643.62" y="78.5" font-size="7.6" fill="#262626" textLength="16.82" lengthAdjust="spacingAndGlyphs" stroke="#262626" stroke-width="0.07">Datei</text>
<text x="703.61" y="68.6" font-size="7.6" fill="#262626" textLength="23.11" lengthAdjust="spacingAndGlyphs" stroke="#262626" stroke-width="0.07">Design</text>
<text x="698.07" y="78.5" font-size="7.6" fill="#262626" textLength="28.82" lengthAdjust="spacingAndGlyphs" stroke="#262626" stroke-width="0.07">wechseln</text>
<text x="743.12" y="68.6" font-size="7.6" fill="#262626" textLength="42.29" lengthAdjust="spacingAndGlyphs" stroke="#262626" stroke-width="0.07">Beziehungen</text>
<text x="748.30" y="78.5" font-size="7.6" fill="#262626" textLength="32.12" lengthAdjust="spacingAndGlyphs" stroke="#262626" stroke-width="0.07">verwalten</text>
<text x="808.62" y="44.7" font-size="7.6" fill="#262626" textLength="51.34" lengthAdjust="spacingAndGlyphs" stroke="#262626" stroke-width="0.07">Neues Measure</text>
<text x="808.62" y="59.7" font-size="7.6" fill="#262626" textLength="39.64" lengthAdjust="spacingAndGlyphs" stroke="#262626" stroke-width="0.07">Neue Spalte</text>
<text x="808.62" y="74.7" font-size="7.6" fill="#262626" textLength="69.94" lengthAdjust="spacingAndGlyphs" stroke="#262626" stroke-width="0.07">Neues Quickmeasure</text>
<text x="889.50" y="68.6" font-size="7.6" fill="#262626" textLength="49.12" lengthAdjust="spacingAndGlyphs" stroke="#262626" stroke-width="0.07">Veröffentlichen</text>
<text x="31.78" y="92" font-size="7.6" fill="#404040" textLength="52.28" lengthAdjust="spacingAndGlyphs" stroke="#404040" stroke-width="0.07">Zwischenablage</text>
<text x="213.64" y="92" font-size="7.6" fill="#404040" textLength="45.06" lengthAdjust="spacingAndGlyphs" stroke="#404040" stroke-width="0.07">Externe Daten</text>
<text x="446.90" y="92" font-size="7.6" fill="#404040" textLength="29.73" lengthAdjust="spacingAndGlyphs" stroke="#404040" stroke-width="0.07">Einfügen</text>
<text x="571.92" y="92" font-size="7.6" fill="#404040" textLength="118.35" lengthAdjust="spacingAndGlyphs" stroke="#404040" stroke-width="0.07">Benutzerdefinierte visuelle Elemente</text>
<text x="702.43" y="92" font-size="7.6" fill="#404040" textLength="25.79" lengthAdjust="spacingAndGlyphs" stroke="#404040" stroke-width="0.07">Designs</text>
<text x="743.12" y="92" font-size="7.6" fill="#404040" textLength="42.29" lengthAdjust="spacingAndGlyphs" stroke="#404040" stroke-width="0.07">Beziehungen</text>
<text x="813.61" y="92" font-size="7.6" fill="#404040" textLength="47.60" lengthAdjust="spacingAndGlyphs" stroke="#404040" stroke-width="0.07">Berechnungen</text>
<text x="905.06" y="92" font-size="7.6" fill="#404040" textLength="18.33" lengthAdjust="spacingAndGlyphs" stroke="#404040" stroke-width="0.07">Teilen</text>
<text x="233.88" y="147" font-size="31.5" fill="#333" textLength="498.14" lengthAdjust="spacingAndGlyphs" stroke="#fff" stroke-width="0.9">Opportunity Count by Region and Stage</text>
<text x="68.87" y="201.7" font-size="8.3" fill="#a3a3a3" textLength="116.60" lengthAdjust="spacingAndGlyphs">Opportunity Count nach Region</text>
<text x="126.70" y="234.2" font-size="9.5" fill="#666" textLength="35.35" lengthAdjust="spacingAndGlyphs" stroke="#666" stroke-width="0.12">West 96</text>
<text x="283.40" y="261.5" font-size="9.5" fill="#666" textLength="51.56" lengthAdjust="spacingAndGlyphs" stroke="#666" stroke-width="0.12">Central 179</text>
<text x="128.22" y="346" font-size="9.5" fill="#666" textLength="38.53" lengthAdjust="spacingAndGlyphs" stroke="#666" stroke-width="0.12">East 212</text>
<text x="401.67" y="196.3" font-size="8.3" fill="#a3a3a3" textLength="188.51" lengthAdjust="spacingAndGlyphs">Opportunity Count nach &quot;Region&quot; und &quot;Sales Stage&quot;</text>
<text x="402.62" y="243" font-size="10" fill="#707070" textLength="31.08" lengthAdjust="spacingAndGlyphs">Central</text>
<text x="415.09" y="284" font-size="10" fill="#707070" textLength="17.79" lengthAdjust="spacingAndGlyphs">East</text>
<text x="412.00" y="325" font-size="10" fill="#707070" textLength="20.88" lengthAdjust="spacingAndGlyphs">West</text>
<text x="823.35" y="210.7" font-size="8.3" fill="#606060" font-weight="bold" textLength="41.84" lengthAdjust="spacingAndGlyphs">Sales Stage</text>
<text x="831.05" y="224.7" font-size="8.3" fill="#666" textLength="18.11" lengthAdjust="spacingAndGlyphs">Lead</text>
<text x="831.37" y="241.3" font-size="8.3" fill="#666" textLength="25.73" lengthAdjust="spacingAndGlyphs">Qualify</text>
<text x="831.36" y="257.6" font-size="8.3" fill="#666" textLength="30.82" lengthAdjust="spacingAndGlyphs">Solution</text>
<text x="831.04" y="274.2" font-size="8.3" fill="#666" textLength="32.78" lengthAdjust="spacingAndGlyphs">Proposal</text>
<text x="831.06" y="290.8" font-size="8.3" fill="#666" textLength="27.63" lengthAdjust="spacingAndGlyphs">Finalize</text>
<text x="64.07" y="378.6" font-size="8.3" fill="#a3a3a3" textLength="144.10" lengthAdjust="spacingAndGlyphs">Opportunity Count nach Partner Driven</text>
<text x="66.05" y="458.6" font-size="10.5" fill="#717171" textLength="15.18" lengthAdjust="spacingAndGlyphs">No</text>
<text x="65.90" y="508" font-size="10.5" fill="#717171" textLength="15.99" lengthAdjust="spacingAndGlyphs">Yes</text>
<text x="398.67" y="403.7" font-size="8.3" fill="#a3a3a3" textLength="208.83" lengthAdjust="spacingAndGlyphs">Opportunity Count nach &quot;Region&quot; und &quot;Opportunity Size&quot;</text>
<text x="399.92" y="450.5" font-size="10" fill="#707070" textLength="30.87" lengthAdjust="spacingAndGlyphs">Central</text>
<text x="410.17" y="490.6" font-size="10" fill="#707070">East</text>
<text x="407.58" y="530.7" font-size="10" fill="#707070">West</text>
<text x="837.58" y="418.5" font-size="8.3" fill="#606060" font-weight="bold" textLength="63.63" lengthAdjust="spacingAndGlyphs">Opportunity Size</text>
<text x="846.28" y="431.9" font-size="8.3" fill="#666" textLength="19.91" lengthAdjust="spacingAndGlyphs">Small</text>
<text x="845.91" y="448.2" font-size="8.3" fill="#666" textLength="30.84" lengthAdjust="spacingAndGlyphs">Medium</text>
<text x="845.95" y="464.9" font-size="8.3" fill="#666" textLength="20.74" lengthAdjust="spacingAndGlyphs">Large</text>
<text x="868.68" y="597" font-size="8.3" fill="#444" textLength="50.37" lengthAdjust="spacingAndGlyphs">obviEnce llc ©</text>
<text x="437.31" y="362.6" font-size="7.6" fill="#888">0</text>
<text x="497.78" y="362.6" font-size="7.6" fill="#888">20</text>
<text x="560.55" y="362.6" font-size="7.6" fill="#888">40</text>
<text x="623.10" y="362.6" font-size="7.6" fill="#888">60</text>
<text x="685.80" y="362.6" font-size="7.6" fill="#888">80</text>
<text x="746.23" y="362.6" font-size="7.6" fill="#888">100</text>
<text x="808.89" y="362.6" font-size="7.6" fill="#888">120</text>
<text x="85.41" y="578" font-size="7.6" fill="#888">0</text>
<text x="166.63" y="578" font-size="7.6" fill="#888">100</text>
<text x="252.31" y="578" font-size="7.6" fill="#888">200</text>
<text x="337.98" y="578" font-size="7.6" fill="#888">300</text>
<text x="434.41" y="570.2" font-size="7.6" fill="#888">0</text>
<text x="481.72" y="570.2" font-size="7.6" fill="#888">10</text>
<text x="531.37" y="570.2" font-size="7.6" fill="#888">20</text>
<text x="581.02" y="570.2" font-size="7.6" fill="#888">30</text>
<text x="630.63" y="570.2" font-size="7.6" fill="#888">40</text>
<text x="680.13" y="570.2" font-size="7.6" fill="#888">50</text>
<text x="729.67" y="570.2" font-size="7.6" fill="#888">60</text>
<text x="779.25" y="570.2" font-size="7.6" fill="#888">70</text>
<text x="828.86" y="570.2" font-size="7.6" fill="#888">80</text>
<text x="68.34" y="622.4" font-size="8.6" fill="#666" textLength="72.64" lengthAdjust="spacingAndGlyphs">Opportunity Count</text>
<text x="169.73" y="622.4" font-size="8.6" fill="#666" textLength="71.21" lengthAdjust="spacingAndGlyphs">Revenue Overview</text>
<text x="269.58" y="622.4" font-size="8.6" fill="#666" textLength="95.69" lengthAdjust="spacingAndGlyphs">Upcoming Opportunities</text>
<text x="393.93" y="622.4" font-size="8.6" fill="#555" textLength="80.08" lengthAdjust="spacingAndGlyphs">Region Stage Counts</text>
<text x="502.45" y="622.4" font-size="8.6" fill="#666" textLength="15.79" lengthAdjust="spacingAndGlyphs">Info</text>
<text x="2.12" y="642" font-size="9" fill="#dddddd" textLength="49.44" lengthAdjust="spacingAndGlyphs">SEITE 4 VON 5</text>
<text x="955.50" y="117.1" font-size="10.3" fill="#eeeeee" font-weight="bold" textLength="90.17" lengthAdjust="spacingAndGlyphs">VISUALISIERUNGEN</text>
<text x="1082.15" y="117.1" font-size="10.3" fill="#eeeeee" font-weight="bold" textLength="36.87" lengthAdjust="spacingAndGlyphs">FELDER</text>
<text x="1101.95" y="147.4" font-size="8.6" fill="#aaaaaa" textLength="30.05" lengthAdjust="spacingAndGlyphs">Suchen</text>
<text x="1107.60" y="176.0" font-size="8.6" fill="#eeeeee" textLength="30.88" lengthAdjust="spacingAndGlyphs">Account</text>
<text x="1106.95" y="195.2" font-size="8.6" fill="#eeeeee" textLength="15.73" lengthAdjust="spacingAndGlyphs">Fact</text>
<text x="1107.24" y="214.4" font-size="8.6" fill="#eeeeee" textLength="46.16" lengthAdjust="spacingAndGlyphs">Opportunity</text>
<text x="1106.93" y="233.6" font-size="8.6" fill="#eeeeee" textLength="27.48" lengthAdjust="spacingAndGlyphs">Partner</text>
<text x="1106.91" y="252.8" font-size="8.6" fill="#eeeeee" textLength="29.67" lengthAdjust="spacingAndGlyphs">Product</text>
<text x="1107.28" y="272.0" font-size="8.6" fill="#eeeeee" textLength="40.30" lengthAdjust="spacingAndGlyphs">SalesStage</text>
<text x="955.20" y="256" font-size="8.6" fill="#eeeeee" textLength="22.51" lengthAdjust="spacingAndGlyphs">Werte</text>
<text x="957.02" y="275.5" font-size="8.6" fill="#a6a6a6" textLength="99.75" lengthAdjust="spacingAndGlyphs">Datenfelder hierher ziehen</text>
<text x="956.22" y="303.5" font-size="10.3" fill="#eeeeee" font-weight="bold" textLength="33.20" lengthAdjust="spacingAndGlyphs">FILTER</text>
<text x="954.73" y="328.5" font-size="8.6" fill="#eeeeee" textLength="81.67" lengthAdjust="spacingAndGlyphs">Filter auf Seitenebene</text>
<text x="955.22" y="351" font-size="8.6" fill="#a6a6a6" textLength="100.06" lengthAdjust="spacingAndGlyphs">Datenfelder hierher ziehen</text>
<text x="954.72" y="372.3" font-size="8.6" fill="#eeeeee" textLength="69.99" lengthAdjust="spacingAndGlyphs">Berichtsstufenfilter</text>
<text x="955.22" y="394.4" font-size="8.6" fill="#a6a6a6" textLength="100.06" lengthAdjust="spacingAndGlyphs">Datenfelder hierher ziehen</text>
<text x="956.45" y="421.4" font-size="10.3" fill="#eeeeee" font-weight="bold" textLength="73.13" lengthAdjust="spacingAndGlyphs">DRILLTHROUGH</text>
<text x="953.10" y="443" font-size="8.6" fill="#eeeeee" textLength="81.48" lengthAdjust="spacingAndGlyphs">Alle Filter beibehalten</text>
<text x="955.90" y="460" font-size="8.6" fill="#eeeeee" textLength="13.84" lengthAdjust="spacingAndGlyphs">Aus</text>
<text x="955.21" y="480.9" font-size="8.6" fill="#a6a6a6" textLength="104.65" lengthAdjust="spacingAndGlyphs">Drillthroughfelder hierher ...</text>
</svg>
</body></html>
